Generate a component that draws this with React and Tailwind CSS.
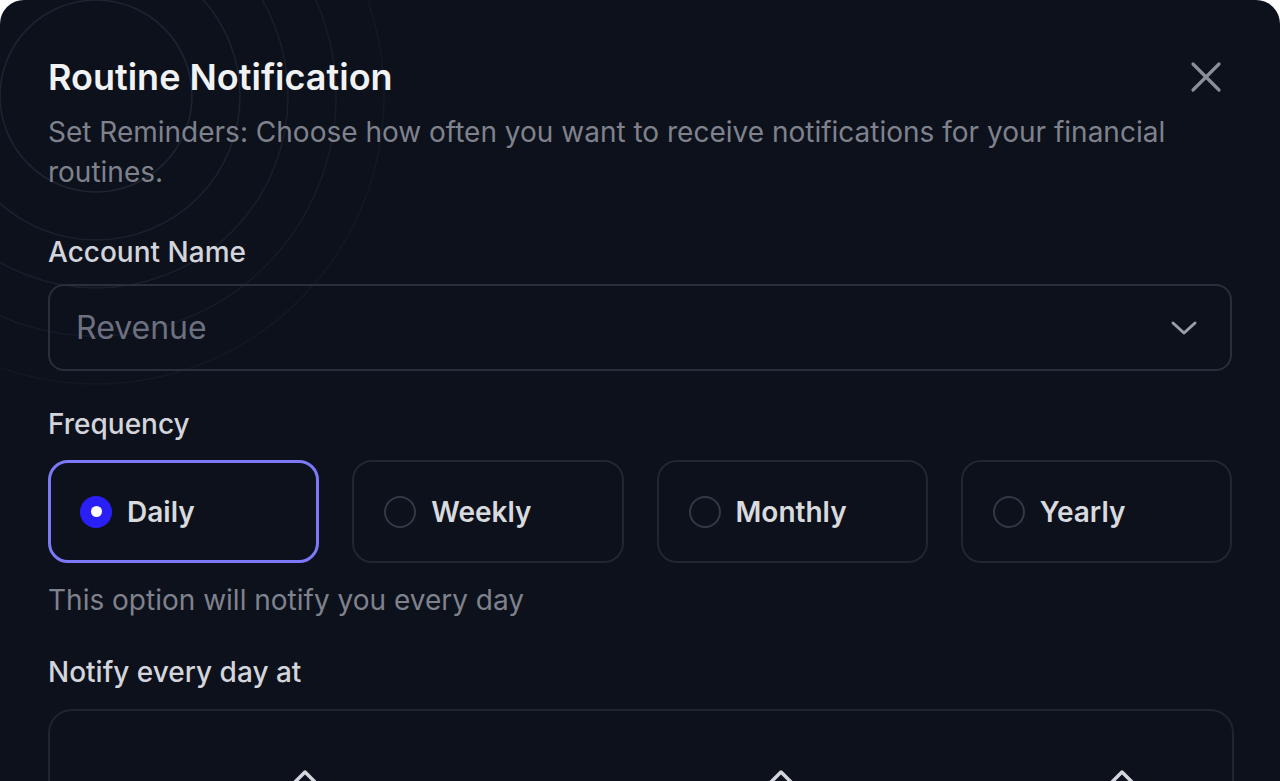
import { useState } from 'react';

const options = ['Daily', 'Weekly', 'Monthly', 'Yearly'];

function Rings() {
  return (
    <svg className="pointer-events-none absolute left-0 top-0" width="420" height="420" viewBox="0 0 420 420" fill="none">
      {[96, 144, 192, 240, 288].map((r, i) => (
        <circle key={r} cx="96" cy="96" r={r} stroke="#1f2433" strokeOpacity={1 - i * 0.15} strokeWidth="1.5" />
      ))}
    </svg>
  );
}

function ChevronUp() {
  return (
    <svg width="34" height="24" viewBox="0 0 34 24" fill="none">
      <path d="M3 19 L17 5 L31 19" stroke="#d4d6dc" strokeWidth="3.5" strokeLinecap="round" strokeLinejoin="round" />
    </svg>
  );
}

export default function App() {
  const [freq, setFreq] = useState('Daily');

  return (
    <div className="min-h-screen bg-white" style={{ fontFamily: 'Inter, "Noto Sans", sans-serif' }}>
      <div className="relative h-[781px] overflow-hidden rounded-t-3xl bg-[#0d111b] pl-12 pr-[47px] pt-[57px]">
        <Rings />

        {/* Header */}
        <div className="relative flex items-start justify-between">
          <h1 className="text-[36px] font-semibold leading-[40px] text-[#f1f2f4]">Routine Notification</h1>
          <button className="mt-[4px] mr-[11px] text-[#8a8e99]">
            <svg width="32" height="32" viewBox="0 0 32 32" fill="none">
              <path d="M3 3 L29 29 M29 3 L3 29" stroke="currentColor" strokeWidth="3.2" strokeLinecap="round" />
            </svg>
          </button>
        </div>
        <p className="relative mt-[15px] max-w-[1150px] text-[28px] leading-[40px] text-[#7f828d]">
          Set Reminders: Choose how often you want to receive notifications for your financial routines.
        </p>

        {/* Account */}
        <label className="relative mt-[42px] block text-[28px] font-medium leading-[36px] text-[#d3d5db]">Account Name</label>
        <div className="relative mt-[14px] mr-[1px] flex h-[87px] items-center justify-between rounded-2xl border-2 border-[#2a2e3a] pl-[26px] pr-8">
          <span className="text-[32px] text-[#6c7080]">Revenue</span>
          <svg width="28" height="18" viewBox="0 0 28 18" fill="none">
            <path d="M3 4 L14 14 L25 4" stroke="#9a9ea9" strokeWidth="3" strokeLinecap="round" strokeLinejoin="round" />
          </svg>
        </div>

        {/* Frequency */}
        <label className="relative mt-[35px] block text-[28px] font-medium leading-[36px] text-[#d3d5db]">Frequency</label>
        <div className="relative mt-[18px] mr-[1px] grid grid-cols-4 gap-[33px]">
          {options.map((o) => {
            const active = freq === o;
            return (
              <button
                key={o}
                onClick={() => setFreq(o)}
                className={
                  active
                    ? 'flex h-[103px] items-center gap-[15px] rounded-[20px] border-[3px] border-[#7c78f6] pl-[29px]'
                    : 'flex h-[103px] items-center gap-[15px] rounded-[20px] border-2 border-[#22262f] pl-[30px]'
                }
              >
                {active ? (
                  <span className="flex h-[32px] w-[32px] items-center justify-center rounded-full bg-[#2a1ff5]">
                    <span className="h-[11px] w-[11px] rounded-full bg-white" />
                  </span>
                ) : (
                  <span className="h-[32px] w-[32px] rounded-full border-2 border-[#343845]" />
                )}
                <span className="text-[28px] font-semibold text-[#d8dade]">{o}</span>
              </button>
            );
          })}
        </div>
        <p className="relative mt-[19px] text-[28px] leading-[36px] text-[#7f828d]">This option will notify you every day</p>

        {/* Time */}
        <label className="relative mt-[36px] block text-[28px] font-medium leading-[36px] text-[#d3d5db]">Notify every day at</label>
        <div className="relative mt-[19px] -mr-[1px] grid h-[200px] grid-cols-[510px_442px_1fr] rounded-3xl border-2 border-[#20242e] pt-[56px]">
          <div className="flex justify-center"><ChevronUp /></div>
          <div className="flex justify-center"><ChevronUp /></div>
          <div className="flex justify-center pl-[9px]"><ChevronUp /></div>
        </div>
      </div>
    </div>
  );
}
